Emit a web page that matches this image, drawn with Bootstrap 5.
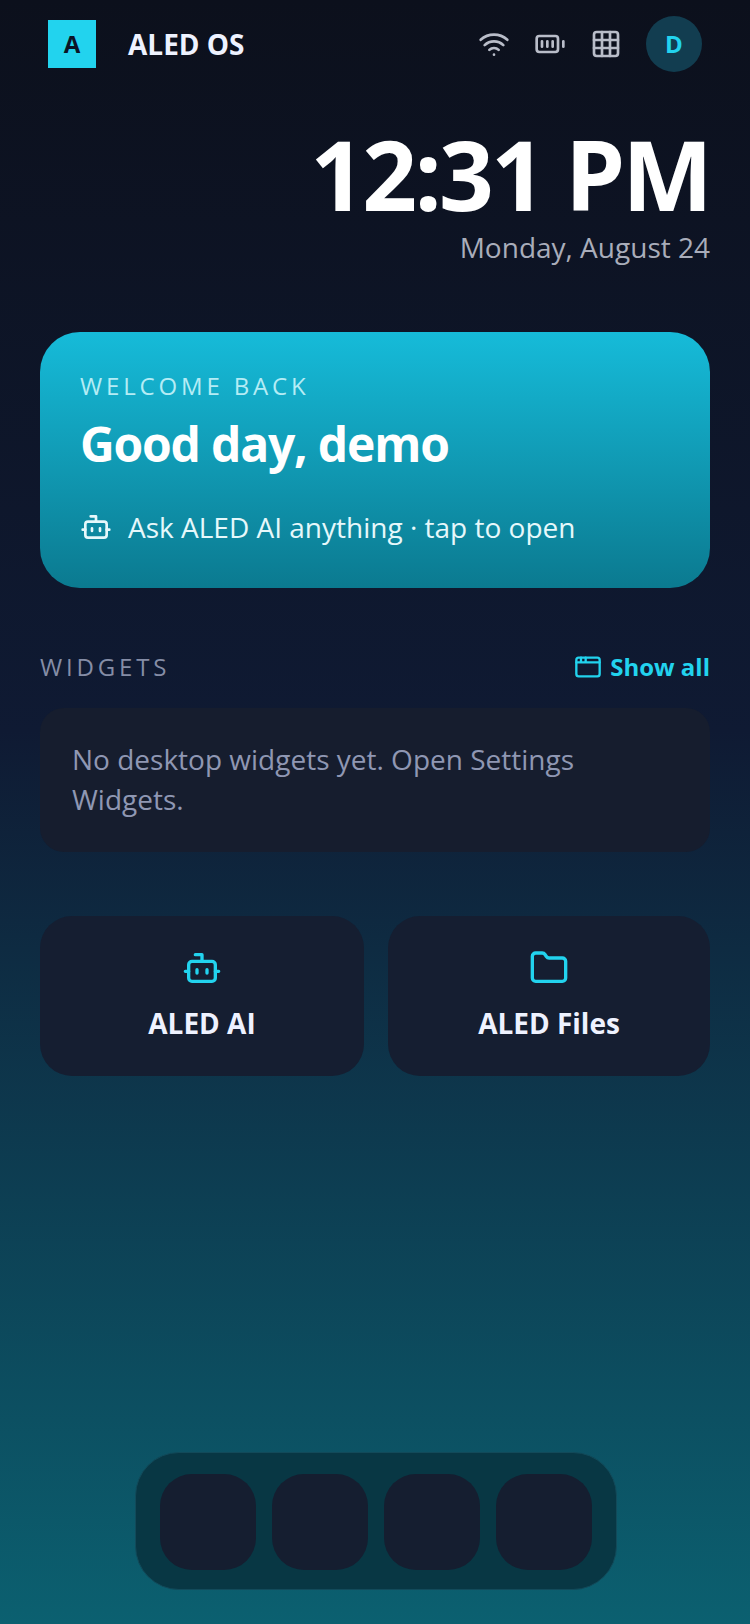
<!DOCTYPE html>
<html lang="en">
<head>
<meta charset="utf-8">
<title>ALED OS</title>
<link href="https://cdn.jsdelivr.net/npm/bootstrap@5.3.0/dist/css/bootstrap.min.css" rel="stylesheet">
<style>
html,body{height:100%;margin:0}
body{width:750px;height:1624px;overflow:hidden;font-family:"Open Sans","Noto Sans",sans-serif;background:linear-gradient(180deg,#0c101c 0%,#0f1a33 45%,#0b6070 100%);color:#fff}
.shell{height:1624px;display:flex;flex-direction:column;padding:0 40px 34px}
.topbar{height:88px;padding:0 8px 0 8px}
.logo-sq{width:48px;height:48px;background:#22d3ee;color:#0b1426;font-weight:700;font-size:24px}
.brand-name{font-size:28px;font-weight:700;color:#eef2ff;margin-left:32px}
.stat-ic{color:#b9bdc9;gap:24px}
.avatar{width:56px;height:56px;border-radius:50%;background:#123d50;color:#22d3ee;font-weight:700;font-size:24px}
.clock-box{text-align:right;margin-top:38px}
.clock-time{font-size:96px;font-weight:700;line-height:96px;letter-spacing:-2.88px}
.clock-date{font-size:28px;color:#a9adba;line-height:40px;margin-top:5px}
.hero{margin-top:65px;height:256px;border-radius:40px;background:linear-gradient(180deg,#16bbd9,#0b7a90);padding:40px}
.hero-eyebrow{font-size:24px;letter-spacing:3.84px;color:#b5ecf5;line-height:28px}
.hero-title{font-size:48px;font-weight:700;line-height:64px;margin-top:12px;letter-spacing:-1.2px}
.hero-ask{font-size:28px;color:#e6f8fb;margin-top:31px;line-height:40px;gap:16px}
.sect-head{margin-top:59px;height:40px}
.sect-label{font-size:24px;letter-spacing:3.84px;color:#858da6}
.show-link{font-size:24px;font-weight:700;color:#22d3ee;text-decoration:none;gap:8px}
.empty-panel{margin-top:21px;height:144px;border-radius:24px;background:#161d2e;padding:31px 32px;font-size:28px;line-height:40px;color:#8f97b3}
.tiles{margin-top:64px;gap:24px}
.tile{height:160px;border-radius:32px;background:#151e31;padding-top:32px}
.tile-left{flex:0 0 324px}
.tile-right{flex:1 1 0}
.tile-name{font-size:28px;font-weight:700;color:#eef2ff;line-height:40px;margin-top:15px}
.dock-wrap{margin-top:auto}
.dock-bar{width:482px;height:138px;border-radius:44px;background:#083744;padding:21px 24px;gap:16px;border:1px solid #124a5a;margin-left:1px}
.dock-cell{width:96px;height:96px;border-radius:32px;background:#151e30}
.lu{fill:none;stroke:currentColor;stroke-width:2;stroke-linecap:round;stroke-linejoin:round}
.lu-cyan{color:#22d3ee}
</style>
</head>
<body>
<div class="shell">
  <div class="topbar d-flex align-items-center">
    <div class="logo-sq d-flex align-items-center justify-content-center">A</div>
    <div class="brand-name">ALED OS</div>
    <div class="ms-auto d-flex align-items-center stat-ic">
      <svg class="lu" width="32" height="32" viewBox="0 0 24 24"><path d="M12 20h.01"/><path d="M2 8.82a15 15 0 0 1 20 0"/><path d="M5 12.859a10 10 0 0 1 14 0"/><path d="M8.5 16.429a5 5 0 0 1 7 0"/></svg>
      <svg class="lu" width="32" height="32" viewBox="0 0 24 24"><rect x="2" y="6" width="16" height="12" rx="2"/><path d="M6 10v4M10 10v4M14 10v4M22 10v4"/></svg>
      <svg class="lu" width="32" height="32" viewBox="0 0 24 24"><rect x="3" y="3" width="18" height="18" rx="2"/><path d="M3 9h18M3 15h18M9 3v18M15 3v18"/></svg>
      <div class="avatar d-flex align-items-center justify-content-center">D</div>
    </div>
  </div>
  <div class="clock-box">
    <div class="clock-time">12:31 PM</div>
    <div class="clock-date">Monday, August 24</div>
  </div>
  <div class="hero">
    <div class="hero-eyebrow">WELCOME BACK</div>
    <div class="hero-title">Good day, demo</div>
    <div class="hero-ask d-flex align-items-center">
      <svg class="lu" width="32" height="32" viewBox="0 0 24 24"><path d="M12 8V4H8"/><rect x="4" y="8" width="16" height="12" rx="2"/><path d="M2 14h2M20 14h2M15 13v2M9 13v2"/></svg>
      <span>Ask ALED AI anything · tap to open</span>
    </div>
  </div>
  <div class="sect-head d-flex align-items-center justify-content-between">
    <div class="sect-label">WIDGETS</div>
    <a class="show-link d-flex align-items-center" href="#">
      <svg class="lu" width="28" height="28" viewBox="0 0 24 24"><rect x="2" y="4" width="20" height="16" rx="2"/><path d="M10 4v4M2 8h20M6 4v4"/></svg>
      <span>Show all</span>
    </a>
  </div>
  <div class="empty-panel">No desktop widgets yet. Open Settings Widgets.</div>
  <div class="tiles d-flex">
    <div class="tile tile-left text-center">
      <svg class="lu lu-cyan" width="40" height="40" viewBox="0 0 24 24"><path d="M12 8V4H8"/><rect x="4" y="8" width="16" height="12" rx="2"/><path d="M2 14h2M20 14h2M15 13v2M9 13v2"/></svg>
      <div class="tile-name">ALED AI</div>
    </div>
    <div class="tile tile-right text-center">
      <svg class="lu lu-cyan" width="40" height="40" viewBox="0 0 24 24"><path d="M20 20a2 2 0 0 0 2-2V8a2 2 0 0 0-2-2h-7.9a2 2 0 0 1-1.69-.9L9.6 3.9A2 2 0 0 0 7.93 3H4a2 2 0 0 0-2 2v13a2 2 0 0 0 2 2Z"/></svg>
      <div class="tile-name">ALED Files</div>
    </div>
  </div>
  <div class="dock-wrap d-flex justify-content-center">
    <div class="dock-bar d-flex">
      <div class="dock-cell"></div><div class="dock-cell"></div><div class="dock-cell"></div><div class="dock-cell"></div>
    </div>
  </div>
</div>
<script src="https://cdn.jsdelivr.net/npm/bootstrap@5.3.0/dist/js/bootstrap.bundle.min.js"></script>
</body>
</html>
